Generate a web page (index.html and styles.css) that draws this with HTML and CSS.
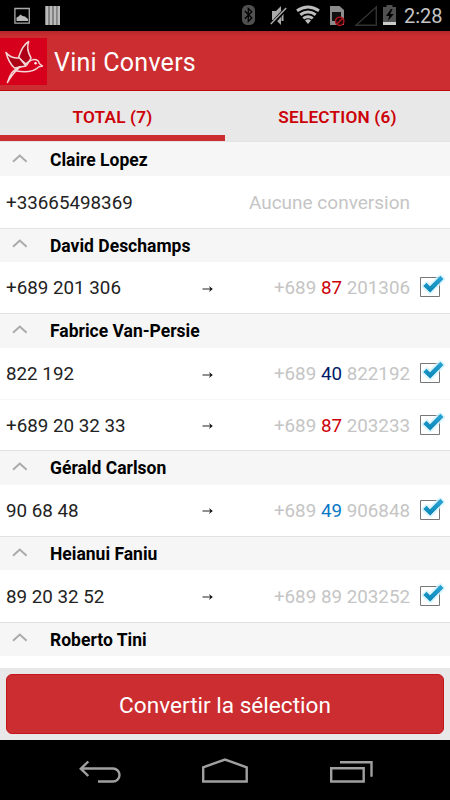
FILE: index.html
```html
<!DOCTYPE html>
<html lang="fr">
<head>
<meta charset="utf-8">
<title>Vini Convers</title>
<link rel="stylesheet" href="styles.css">
</head>
<body>
<svg class="defs" width="0" height="0" aria-hidden="true">
  <defs>
    <linearGradient id="tick" x1="0" y1="0" x2="0" y2="1"><stop offset="0" stop-color="#2ba6d6"/><stop offset="1" stop-color="#0784b5"/></linearGradient>
    <symbol id="chevron" viewBox="0 0 16 9"><path d="M1 7.8 7.8 1.6 14.6 7.8" fill="none" stroke="#aaa" stroke-width="2"/></symbol>
    <symbol id="arrow" viewBox="0 0 12 8"><path d="M.5 4H9" fill="none" stroke="#333" stroke-width="1.1"/><path d="M7 1 10.8 4 7 7 8.3 4Z" fill="#111"/></symbol>
    <symbol id="check" viewBox="0 0 30 28">
      <path d="M5.5 7.5h19v19h-19z" fill="#fff" stroke="#777"/>
      <path d="M8.5 16.2 11.8 13.2 15 16.5 25.2 6.2 28.3 9.2 15.2 22.4Z" fill="#c4effc" stroke="#d2f4fd" stroke-width="4" stroke-linejoin="round" opacity=".75"/>
      <path d="M8.3 16 11.5 12.8 15 16.2 25.4 5.8 28.5 9 15.2 22.6Z" fill="url(#tick)"/>
    </symbol>
  </defs>
</svg>
<div class="status">
  <svg class="status-icons" viewBox="0 0 70 31" width="70" height="31">
    <path d="M14.9 8.5h14.4v14.7H14.9z" fill="none" stroke="#aaa" stroke-width="1.3"/>
    <path d="M16.5 21v-3.5l2-1 2-2 2 1.6 2.5.4 3 2.5v2z" fill="#bbb"/>
    <path d="M45 6h15v19H45z" fill="#777"/><path d="M47 6v19M51 6v19M55 6v19M58.8 6v19" stroke="#bbb" stroke-width="2.4"/>
  </svg>
  <svg class="status-icons" viewBox="0 0 160 31" width="160" height="31">
    <rect x="2" y="5" width="13" height="20" rx="5.5" fill="#505050"/>
    <path d="m4.8 11 7 7-3.5 3.5v-13l3.5 3.3-7 7" fill="none" stroke="#000" stroke-width="1.3"/>
    <path d="M32 11h4l5-5v19l-5-5h-4z" fill="#aaa"/><path d="M42.5 11v10" stroke="#aaa" stroke-width="2"/>
    <path d="M31 25 46.5 8" stroke="#000" stroke-width="4"/><path d="M30.8 24 46.2 8" stroke="#aaa" stroke-width="1.5"/>
    <g fill="none" stroke="#bdbdbd" stroke-width="3"><path d="M57 10.8Q68 3.2 79 10.8M60.3 14.8Q68 9.2 75.7 14.8M63.2 18.4Q68 15 72.8 18.4"/></g><path d="M65 20.4Q68 18.2 71 20.4L68 24Z" fill="#bdbdbd"/>
    <path d="M90 6h9.5l4.5 4v15H90z" fill="#8c8c8c"/><path d="M92 12h9v9h-9z" fill="#111"/>
    <circle cx="99.7" cy="21.3" r="4.2" fill="#210507" stroke="#b5141f" stroke-width="1.4"/><path d="m97 24 5.5-5.5" stroke="#b5141f" stroke-width="1.4"/>
    <path d="M116 25.2H136.3V7Z" fill="none" stroke="#333" stroke-width="1.4"/>
    <path d="M143 7h3.5V5h6v2h3.5v18h-13z" fill="#505050"/><path d="M143 22h13v3h-13z" fill="#ccc"/><path d="m151 9-5 7h3.3l-1.5 5 6-7h-3.6l2.3-5z" fill="#000"/>
  </svg>
  <span class="clock">2:28</span>
</div>
<header class="bar">
  <svg class="logo" viewBox="0 0 47 47" width="47" height="47">
    <rect width="47" height="47" fill="#d6001c"/>
    <g fill="none" stroke="#f3d6d6" stroke-width="1.5" stroke-linejoin="round" stroke-linecap="round">
      <path fill="#ad0016" d="M18.5 19.5C21 12 24 6 28.7 3.5 26.5 9.5 27.5 14 31 20L27 27Z"/>
      <path fill="#ad0016" d="M6 14.5C10 19.5 14.5 20.5 19.5 20L26 28 14.5 30C10 26 7.5 20 6 14.5Z"/>
      <path d="M25 26.5C29 24 30.5 21.5 34 21.5 37.2 21.5 39 23.5 39.2 25.5L42.5 28 39 28.7C34 33.5 27 35 16.5 33M20.5 28.5C15.5 33 11 38 7.5 44.5 9.5 37 13.5 31 20.5 28.5"/>
    </g><circle cx="35.5" cy="25.3" r="1.2" fill="#fff"/>
  </svg>
  <h1>Vini Convers</h1>
</header>
<nav class="tabs"><div class="tab active"><span>TOTAL (7)</span></div><div class="tab"><span>SELECTION (6)</span></div></nav>
<main class="list">
  <h2><svg class="chev"><use href="#chevron"/></svg>Claire Lopez</h2>
  <div class="row"><span class="num">+33665498369</span><span class="none">Aucune conversion</span></div>
  <h2><svg class="chev"><use href="#chevron"/></svg>David Deschamps</h2>
  <div class="row"><span class="num">+689 201 306</span><svg class="arr"><use href="#arrow"/></svg><span class="conv">+689 <b class="red">87</b> 201306</span><svg class="chk"><use href="#check"/></svg></div>
  <h2><svg class="chev"><use href="#chevron"/></svg>Fabrice Van-Persie</h2>
  <div class="row"><span class="num">822 192</span><svg class="arr"><use href="#arrow"/></svg><span class="conv">+689 <b class="navy">40</b> 822192</span><svg class="chk"><use href="#check"/></svg></div>
  <div class="row next"><span class="num">+689 20 32 33</span><svg class="arr"><use href="#arrow"/></svg><span class="conv">+689 <b class="red">87</b> 203233</span><svg class="chk"><use href="#check"/></svg></div>
  <h2><svg class="chev"><use href="#chevron"/></svg>Gérald Carlson</h2>
  <div class="row"><span class="num">90 68 48</span><svg class="arr"><use href="#arrow"/></svg><span class="conv">+689 <b class="blue">49</b> 906848</span><svg class="chk"><use href="#check"/></svg></div>
  <h2><svg class="chev"><use href="#chevron"/></svg>Heianui Faniu</h2>
  <div class="row"><span class="num">89 20 32 52</span><svg class="arr"><use href="#arrow"/></svg><span class="conv">+689 89 203252</span><svg class="chk"><use href="#check"/></svg></div>
  <h2><svg class="chev"><use href="#chevron"/></svg>Roberto Tini</h2>
</main>
<footer class="action"><button>Convertir la sélection</button></footer>
<div class="sysnav">
  <svg viewBox="0 0 450 60" width="450" height="60" fill="none" stroke="#a0a0a0" stroke-width="2.4">
    <path d="M80.5 28.5H113a6.5 6.5 0 0 1 0 13H98M88.3 21.5 80.8 28.7 88.3 36"/>
    <path d="M203.2 41.5V27.3L225 19.5 246.7 27.3V41.5Z"/>
    <path d="M331.2 28.2h32.5v13.3h-32.5zM340 22.3h31.5v14.5"/>
  </svg>
</div>
</body>
</html>
```

FILE: styles.css
```css
* { box-sizing: border-box; }
body {
  margin: 0;
  width: 450px;
  height: 800px;
  overflow: hidden;
  display: flex;
  flex-direction: column;
  background: #fff;
  color: #222;
  font-family: Roboto, "Liberation Sans", sans-serif;
}
.defs { position: absolute; }
.status {
  height: 31px;
  flex: none;
  display: flex;
  align-items: center;
  background: #000;
}
.status-icons { flex: none; }
.status-icons + .status-icons { margin-left: 170px; }
.clock {
  margin-left: 4px;
  padding-top: 1px;
  font-size: 20px;
  line-height: 30px;
  color: #c4c4c4;
}
.bar {
  height: 60px;
  flex: none;
  display: flex;
  align-items: center;
  background: linear-gradient(#b5262a, #cb2d30 5px);
  border-bottom: 1px solid #c4070c;
  padding-top: 2px;
}
h1 {
  margin: 2px 0 0 7px;
  font-size: 25px;
  font-weight: 400;
  letter-spacing: 0.25px;
  color: #fff;
}
.tabs {
  height: 51px;
  flex: none;
  display: flex;
  background: #e8e8e8;
  border-bottom: 1px solid #e4e4e4;
}
.tab {
  flex: 1;
  text-align: center;
  color: #cc0007;
  font-size: 17.2px;
  font-weight: 600;
  letter-spacing: 0.2px;
  line-height: 52px;
  height: 50px;
}
.tab.active {
  border-bottom: 6px solid #cb2d30;
}
.list { height: 526px; flex: none; overflow: hidden; }
h2 {
  display: flex;
  align-items: center;
  margin: 0;
  height: 34.33px;
  padding: 1px 0 0 12px;
  background: #f6f6f6;
  border-top: 1px solid #e2e2e2;
  color: #000;
  font-size: 17.5px;
  font-weight: 700;
}
h2:first-child { border-top-color: #f6f6f6; }
.chev { width: 16px; height: 9px; margin: -4px 22px 0 0; }
.row {
  display: flex;
  align-items: center;
  height: 51.33px;
  padding: 1.4px 5px 0 6px;
  font-size: 18.8px;
}
.row.next { border-top: 1px solid #f6f6f6; }
.num { width: 196px; }
.arr { width: 12px; height: 8px; margin-top: 1px; }
.conv, .none { margin-left: auto; color: #c5c5c5; }
.none { margin-right: 35px; font-size: 19px; }
.conv b { font-weight: 400; }
.conv .red { color: #cc0007; }
.conv .navy { color: #001a66; }
.conv .blue { color: #0a78c8; }
.chk { width: 30px; height: 28px; margin: -8px 0 0 5px; }
.action {
  height: 72px;
  flex: none;
  padding: 6px;
  background: #e8e8e8;
}
button {
  display: block;
  width: 438px;
  height: 60px;
  padding: 2px 0 0;
  border: 1px solid #c4151a;
  border-radius: 6px;
  background: #cb2d30;
  color: #fff;
  font: 400 22.6px Roboto, "Liberation Sans", sans-serif;
}
.sysnav { height: 60px; flex: none; background: #000; }
```
